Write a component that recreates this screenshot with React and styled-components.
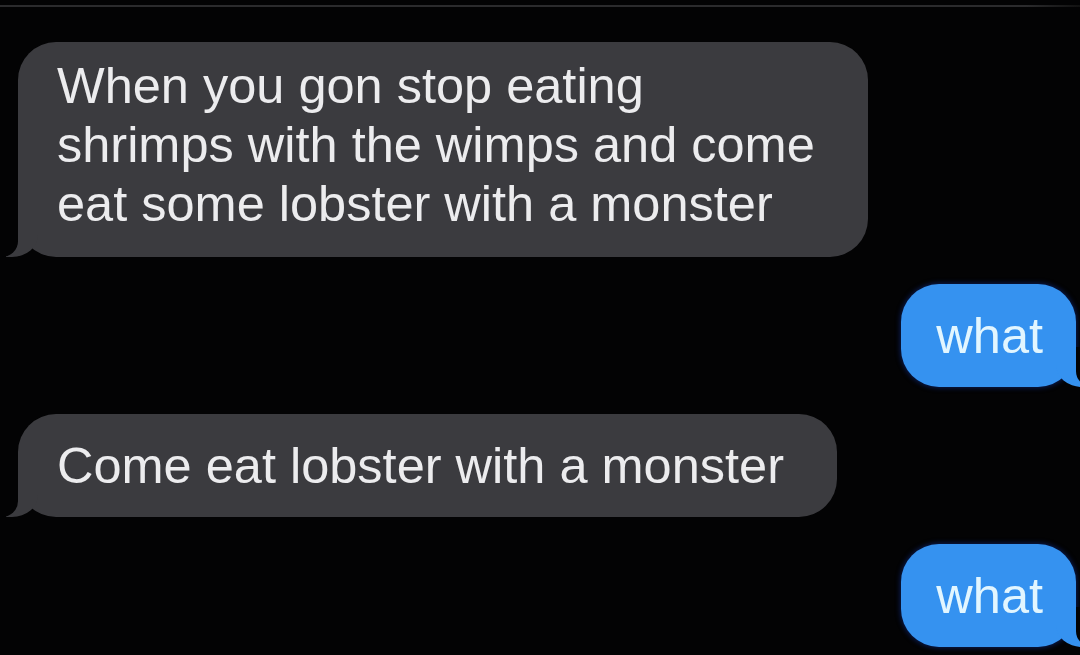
import styled, { createGlobalStyle, css } from "styled-components";

const BG = "#030304";
const GRAY = "#3b3b3f";
const BLUE = "#3592f0";

const GlobalStyle = createGlobalStyle`
  html, body {
    margin: 0;
    padding: 0;
    background: ${BG};
  }
  body {
    font-family: "Liberation Sans", Arial, sans-serif;
  }
`;

const Screen = styled.div`
  width: 1080px;
  height: 655px;
  overflow: hidden;
  background: ${BG};
  display: flex;
  flex-direction: column;
`;

const TopRule = styled.div`
  height: 2px;
  margin-top: 5px;
  background: linear-gradient(to right, #2b2b2d 0%, #2b2b2d 95%, #111 100%);
`;

const Thread = styled.div`
  display: flex;
  flex-direction: column;
  gap: 27px;
  padding: 35px 4px 0 18px;
`;

const incoming = css`
  align-self: flex-start;
  background: ${GRAY};
  color: #ececee;
  padding: 22px 53px 22px 39px;

  &::before {
    left: -12px;
    width: 32px;
    background: ${GRAY};
    border-bottom-right-radius: 26px 22px;
  }
  &::after {
    left: -40px;
    width: 40px;
    border-bottom-right-radius: 16px;
  }
`;

const outgoing = css`
  align-self: flex-end;
  background: ${BLUE};
  color: #e2f6ff;
  padding: 22px 33px 22px 35px;
  box-shadow: 0 0 5px 1px rgba(18, 50, 150, 0.55);

  &::before {
    right: -12px;
    width: 32px;
    background: ${BLUE};
    border-bottom-left-radius: 26px 22px;
  }
  &::after {
    right: -40px;
    width: 40px;
    border-bottom-left-radius: 16px;
  }
`;

const Bubble = styled.div`
  position: relative;
  border-radius: 38px;
  font-size: 50.5px;
  line-height: 59px;
  white-space: nowrap;

  &::before,
  &::after {
    content: "";
    position: absolute;
    bottom: 0;
    height: 40px;
  }
  &::after {
    background: ${BG};
  }

  ${(p) => (p.$from === "me" ? outgoing : incoming)}
  ${(p) =>
    p.$multi &&
    css`
      padding-top: 14px;
      padding-bottom: 24px;
    `}
`;

const messages = [
  {
    from: "them",
    lines: [
      "When you gon stop eating",
      "shrimps with the wimps and come",
      "eat some lobster with a monster",
    ],
  },
  { from: "me", lines: ["what"] },
  { from: "them", lines: ["Come eat lobster with a monster"] },
  { from: "me", lines: ["what"] },
];

export default function App() {
  return (
    <>
      <GlobalStyle />
      <Screen>
        <TopRule />
        <Thread>
          {messages.map((m, i) => (
            <Bubble key={i} $from={m.from} $multi={m.lines.length > 1}>
              {m.lines.map((line, j) => (
                <div key={j}>{line}</div>
              ))}
            </Bubble>
          ))}
        </Thread>
      </Screen>
    </>
  );
}
